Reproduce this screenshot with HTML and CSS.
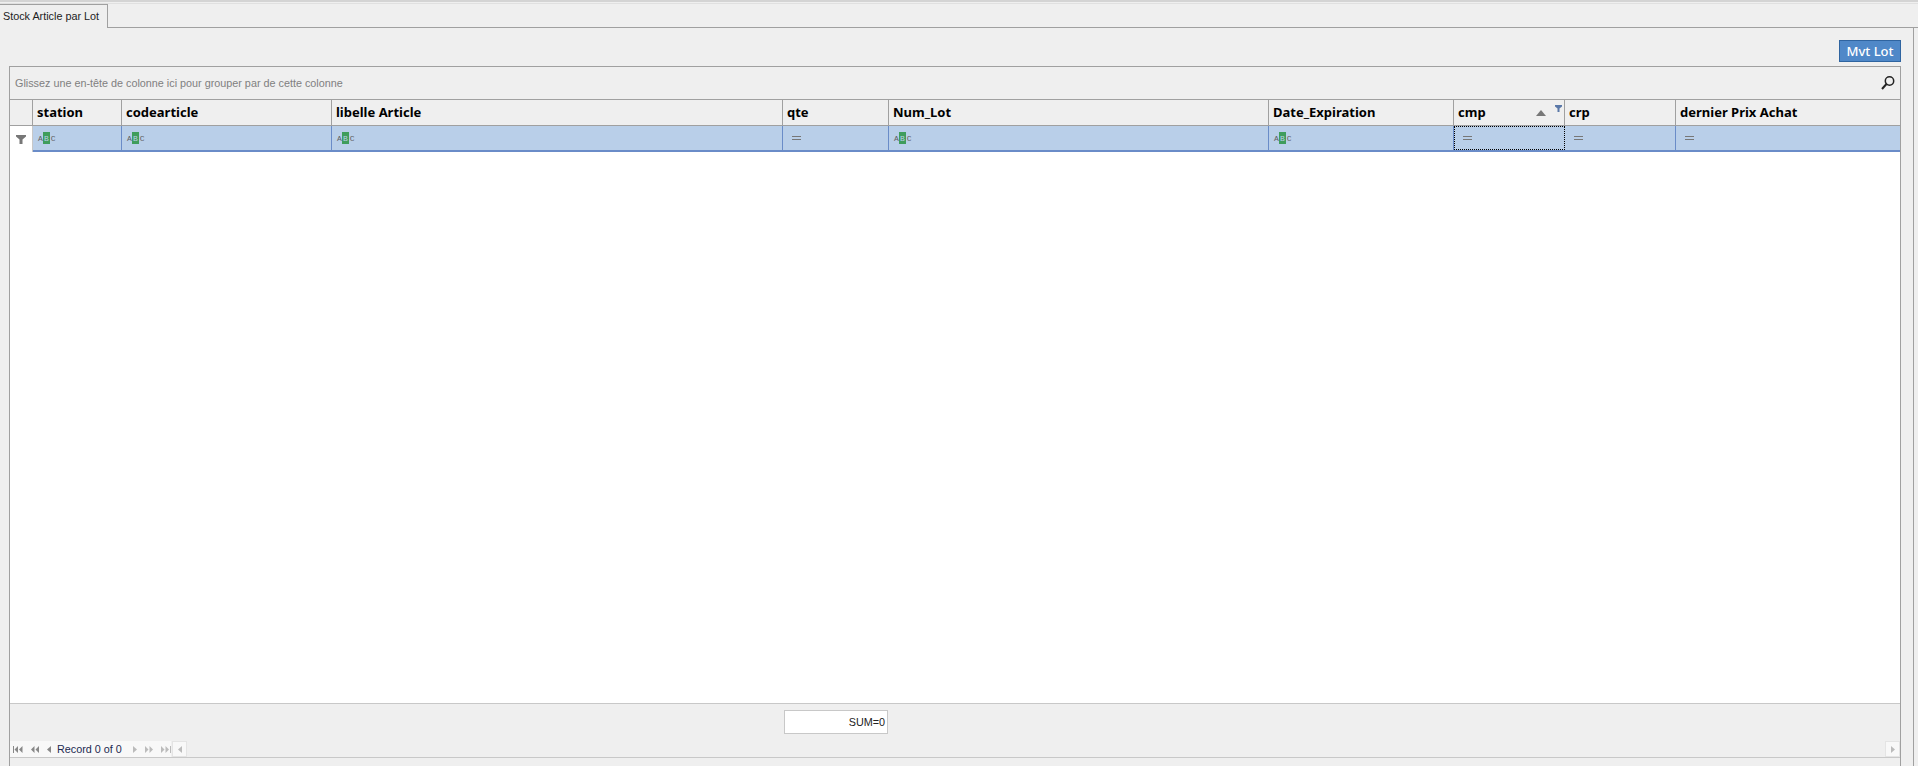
FILE: index.html
```html
<!DOCTYPE html>
<html lang="fr">
<head>
    <meta charset="UTF-8">
    <title>Stock Article par Lot</title>
    <link rel="stylesheet" href="styles.css">
</head>
<body>
    <div class="top-strip"></div>
    <div class="tabs">
        <div class="tab">Stock Article par Lot</div>
        <div class="tab-fill"></div>
    </div>
    <div class="tab-page">
        <div class="toolbar">
            <button class="btn-mvt">Mvt Lot</button>
        </div>
        <div class="grid">
            <div class="group-panel">
                <span>Glissez une en-tête de colonne ici pour grouper par de cette colonne</span>
                <svg class="search-icon" width="16" height="16" viewBox="0 0 16 16">
                    <circle cx="9.5" cy="6" r="4.2" fill="none" stroke="#222" stroke-width="1.5"/>
                    <path d="M6.5 9 L2 14" stroke="#222" stroke-width="2"/>
                </svg>
            </div>
            <div class="row header-row">
                <div class="cell indicator"></div>
                <div class="cell">station</div>
                <div class="cell">codearticle</div>
                <div class="cell">libelle Article</div>
                <div class="cell">qte</div>
                <div class="cell">Num_Lot</div>
                <div class="cell">Date_Expiration</div>
                <div class="cell sorted">cmp
                    <svg class="sort-icon" width="10" height="6" viewBox="0 0 10 6"><path d="M5 0 L10 6 H0 Z" fill="#777"/></svg>
                    <svg class="filter-mark" width="7" height="7" viewBox="0 0 7 7"><path d="M0 0 H7 V1.5 L4.5 3.5 V7 H2.5 V3.5 L0 1.5 Z" fill="#5a78a8"/></svg>
                </div>
                <div class="cell">crp</div>
                <div class="cell">dernier Prix Achat</div>
            </div>
            <div class="row filter-row">
                <div class="cell indicator">
                    <svg width="10" height="9" viewBox="0 0 10 9"><path d="M0 0 H10 V1.5 L6.5 4.5 V9 H3.5 V4.5 L0 1.5 Z" fill="#777"/></svg>
                </div>
                <div class="cell"><span class="abc">A<b>B</b>C</span></div>
                <div class="cell"><span class="abc">A<b>B</b>C</span></div>
                <div class="cell"><span class="abc">A<b>B</b>C</span></div>
                <div class="cell"><span class="equals"></span></div>
                <div class="cell"><span class="abc">A<b>B</b>C</span></div>
                <div class="cell"><span class="abc">A<b>B</b>C</span></div>
                <div class="cell focused"><span class="equals"></span></div>
                <div class="cell"><span class="equals"></span></div>
                <div class="cell"><span class="equals"></span></div>
            </div>
            <div class="grid-body"></div>
            <div class="summary">
                <div class="sum-box">SUM=0</div>
            </div>
            <div class="nav">
                <div class="nav-buttons">
                    <svg class="nav-icon" width="10" height="7" viewBox="0 0 10 7"><path d="M0 0H1V7H0ZM5 0V7L1.5 3.5ZM9.5 0V7L6 3.5Z"/></svg>
                    <svg class="nav-icon" width="8" height="7" viewBox="0 0 8 7"><path d="M3.5 0V7L0 3.5ZM8 0V7L4.5 3.5Z"/></svg>
                    <svg class="nav-icon" width="4" height="7" viewBox="0 0 4 7"><path d="M4 0V7L0 3.5Z"/></svg>
                    <span class="record">Record 0 of 0</span>
                    <svg class="nav-icon dim" width="4" height="7" viewBox="0 0 4 7"><path d="M0 0V7L4 3.5Z"/></svg>
                    <svg class="nav-icon dim" width="8" height="7" viewBox="0 0 8 7"><path d="M0 0V7L3.5 3.5ZM4.5 0V7L8 3.5Z"/></svg>
                    <svg class="nav-icon dim" width="10" height="7" viewBox="0 0 10 7"><path d="M0 0V7L3.5 3.5ZM4.5 0V7L8 3.5ZM9 0H10V7H9Z"/></svg>
                </div>
                <div class="scroll-btn">
                    <svg width="4" height="7" viewBox="0 0 4 7"><path d="M4 0V7L0 3.5Z" fill="#bbb"/></svg>
                </div>
                <div class="scroll-track"></div>
                <div class="scroll-btn">
                    <svg width="4" height="7" viewBox="0 0 4 7"><path d="M0 0V7L4 3.5Z" fill="#bbb"/></svg>
                </div>
            </div>
            <div class="grid-foot"></div>
        </div>
    </div>
</body>
</html>
```

FILE: styles.css
```css
* {
    box-sizing: border-box;
}

body {
    margin: 0;
    width: 1918px;
    height: 766px;
    overflow: hidden;
    background-color: #efefef;
    color: #000;
    font-family: "Liberation Sans", sans-serif;
    font-size: 10.8px;
    display: flex;
    flex-direction: column;
}

.top-strip {
    height: 4px;
    background-color: #efefef;
    border-top: 2px solid #d4d4d4;
    border-bottom: 1px solid #e0e0e0;
}

.tabs {
    display: flex;
    height: 24px;
}

.tab {
    width: 108px;
    padding: 5px 0 0 3px;
    border-top: 1px solid #a0a0a0;
    border-right: 1px solid #a0a0a0;
    white-space: nowrap;
    color: #222;
}

.tab-fill {
    flex: 1;
    border-bottom: 1px solid #a0a0a0;
}

.tab-page {
    flex: 1;
    display: flex;
    flex-direction: column;
    margin-right: 4px;
    padding: 12px 12px 0 9px;
    border-right: 1px solid #a0a0a0;
    min-height: 0;
}

.toolbar {
    display: flex;
    justify-content: flex-end;
    height: 26px;
    flex: none;
}

.btn-mvt {
    width: 62px;
    height: 22px;
    padding: 0;
    background-color: #4f88c8;
    border: 1px solid #2f64a0;
    color: #fff;
    font-family: "Noto Sans", sans-serif;
    font-size: 13px;
    font-weight: 500;
}

.grid {
    flex: 1;
    display: flex;
    flex-direction: column;
    min-height: 0;
    border-top: 1px solid #a0a0a0;
    border-left: 1px solid #a0a0a0;
    border-right: 1px solid #a0a0a0;
}

.group-panel {
    flex: none;
    height: 33px;
    display: flex;
    justify-content: space-between;
    align-items: center;
    padding: 0 4px 0 5px;
    color: #808080;
    border-bottom: 1px solid #a0a0a0;
}

.row {
    flex: none;
    display: grid;
    grid-template-columns: 23px 89px 210px 451px 106px 380px 185px 111px 111px 1fr;
}

.header-row {
    height: 26px;
    border-bottom: 1px solid #a0a0a0;
    font-family: "Noto Sans", sans-serif;
    font-size: 13px;
    font-weight: 700;
}

.header-row .cell {
    display: flex;
    align-items: center;
    padding: 0 0 2px 4px;
    border-right: 1px solid #a0a0a0;
    position: relative;
}

.header-row .cell:last-child {
    border-right: none;
}

.sort-icon {
    position: absolute;
    right: 18px;
    top: 10px;
}

.filter-mark {
    position: absolute;
    right: 2px;
    top: 5px;
}

.filter-row {
    height: 26px;
    background-color: #b9cfe9;
    border-bottom: 2px solid #6a8cc8;
}

.filter-row .cell {
    display: flex;
    align-items: center;
    padding-left: 5px;
    border-right: 1px solid #6a8cc8;
}

.filter-row .cell:last-child {
    border-right: none;
}

.filter-row .indicator {
    background-color: #fff;
    justify-content: center;
    padding-left: 0;
    border-right: 1px solid #c8c8c8;
    margin-bottom: -2px;
}

.filter-row .focused {
    border: 1px dotted #000;
    padding-left: 8px;
}

.abc {
    display: flex;
    align-items: center;
    font-family: "Liberation Mono", monospace;
    font-size: 8px;
    color: #606060;
}

.abc b {
    width: 7px;
    height: 12px;
    margin-right: 1px;
    display: flex;
    align-items: center;
    justify-content: center;
    background-color: #3f9d5c;
    color: #b9cfe9;
    font-weight: 400;
}

.equals {
    width: 9px;
    height: 4px;
    margin-left: 4px;
    border-top: 1px solid #777;
    border-bottom: 1px solid #777;
}

.focused .equals {
    margin-left: 0;
}

.grid-body {
    flex: 1;
    background-color: #fff;
    border-bottom: 1px solid #c8c8c8;
}

.summary {
    flex: none;
    height: 37px;
    padding: 6px 0 0 774px;
}

.sum-box {
    width: 104px;
    height: 24px;
    background-color: #fff;
    border: 1px solid #c8c8c8;
    text-align: right;
    line-height: 22px;
    padding-right: 2px;
    color: #222;
}

.nav {
    flex: none;
    display: flex;
    height: 17px;
    border-bottom: 1px solid #c8c8c8;
}

.nav-buttons {
    display: flex;
    align-items: center;
    gap: 8px;
    width: 161px;
    padding-left: 3px;
    background-color: #f8f8f8;
}

.nav-icon {
    fill: #888;
    flex: none;
}

.nav-icon.dim {
    fill: #bbb;
}

.record {
    margin-left: -2px;
    margin-right: 3px;
    color: #1c2a50;
    white-space: nowrap;
}

.scroll-btn {
    width: 15px;
    margin-left: 1px;
    display: flex;
    align-items: center;
    justify-content: center;
    background-color: #f8f8f8;
    border: 1px solid #e4e4e4;
}

.scroll-track {
    flex: 1;
}

.grid-foot {
    flex: none;
    height: 8px;
}
```
